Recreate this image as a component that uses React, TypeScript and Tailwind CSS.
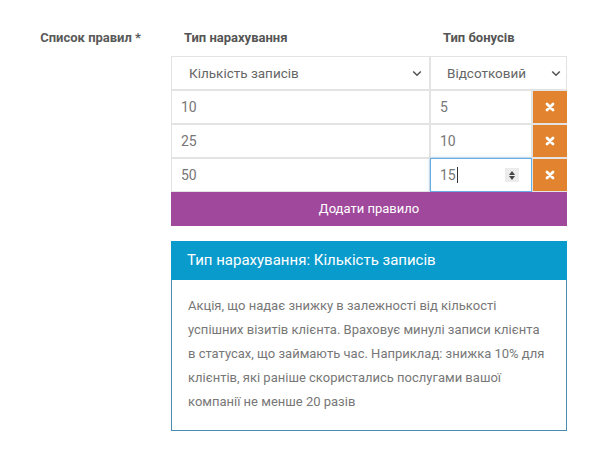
import React from "react";

const Chevron = () => (
  <svg width="10" height="7" viewBox="0 0 10 7" className="shrink-0">
    <path d="M1.2 1.5 L5 5.2 L8.8 1.5" fill="none" stroke="#555" strokeWidth="1.6" />
  </svg>
);

const XIcon = () => (
  <svg width="10" height="10" viewBox="0 0 10 10">
    <path d="M2 2 L8 8 M8 2 L2 8" stroke="#fff" strokeWidth="2.8" strokeLinecap="round" />
  </svg>
);

const Del = () => (
  <div className="w-[35px] h-full border-y border-l border-[#e3e3e3] bg-white flex">
    <div className="flex-1 bg-[#e2832f] flex items-center justify-center">
      <XIcon />
    </div>
  </div>
);

const rows = [
  ["10", "5"],
  ["25", "10"],
];

export default function App() {
  return (
    <div className="w-[614px] h-[460px] bg-white font-[family-name:Roboto,sans-serif] text-[13px] flex">
      <div className="w-[171px] shrink-0 h-[56px] pt-[20px] flex items-center justify-end pr-[30px] font-bold text-[#5a5a5a]">
        Список правил *
      </div>
      <div className="w-[396px] flex flex-col">
        <div className="h-[56px] pt-[20px] flex items-center font-bold text-[#555]">
          <div className="w-[259px] pl-[13px]">Тип нарахування</div>
          <div className="pl-[13px]">Тип бонусів</div>
        </div>
        <div className="flex h-[34px] text-[13.5px] text-[#666]">
          <div className="w-[259px] border border-[#e3e3e3] flex items-center pl-[17px] pr-[7px] justify-between">
            <span>Кількість записів</span>
            <Chevron />
          </div>
          <div className="w-[137px] border border-[#e3e3e3] flex items-center pl-[16px] pr-[5px] justify-between">
            <span>Відсотковий</span>
            <Chevron />
          </div>
        </div>
        {rows.map((r) => (
          <div key={r[0]} className="flex h-[34px] text-[14px] text-[#777]">
            <div className="w-[259px] border border-[#e3e3e3] flex items-center pl-[9px]">{r[0]}</div>
            <div className="w-[102px] border border-[#e3e3e3] flex items-center pl-[9px]">{r[1]}</div>
            <Del />
          </div>
        ))}
        <div className="flex h-[34px] text-[14px] text-[#777]">
          <div className="w-[259px] border border-[#e3e3e3] flex items-center pl-[9px]">50</div>
          <div className="w-[102px] border border-[#66afe9] shadow-[0_0_3px_rgba(102,175,233,0.5)] flex items-center pl-[9px] pr-[12px] justify-between">
            <span className="flex items-center">
              15<span className="w-px h-[16px] bg-[#333] ml-[1px]" />
            </span>
            <span className="w-[14px] h-[14px] bg-[#ececec] flex flex-col items-center justify-center gap-[1px]">
              <span className="w-0 h-0 border-x-[3px] border-x-transparent border-b-[4px] border-b-[#444]" />
              <span className="w-0 h-0 border-x-[3px] border-x-transparent border-t-[4px] border-t-[#444]" />
            </span>
          </div>
          <Del />
        </div>
        <div className="h-[34px] bg-[#a0489c] text-white flex items-center justify-center">
          Додати правило
        </div>
        <div className="mt-[15px] flex flex-col">
          <div className="h-[39px] bg-[#0a9bcd] text-white text-[15px] flex items-center pl-[16px]">
            Тип нарахування: Кількість записів
          </div>
          <div className="border border-t-0 border-[#4a8db0] pl-[16px] pr-[16px] pt-[14px] pb-[16px] text-[#777] leading-[24px]">
            Акція, що надає знижку в залежності від кількості успішних візитів клієнта. Враховує минулі записи клієнта в статусах, що займають час. Наприклад: знижка 10% для клієнтів, які раніше скористались послугами вашої компанії не менше 20 разів
          </div>
        </div>
      </div>
    </div>
  );
}
